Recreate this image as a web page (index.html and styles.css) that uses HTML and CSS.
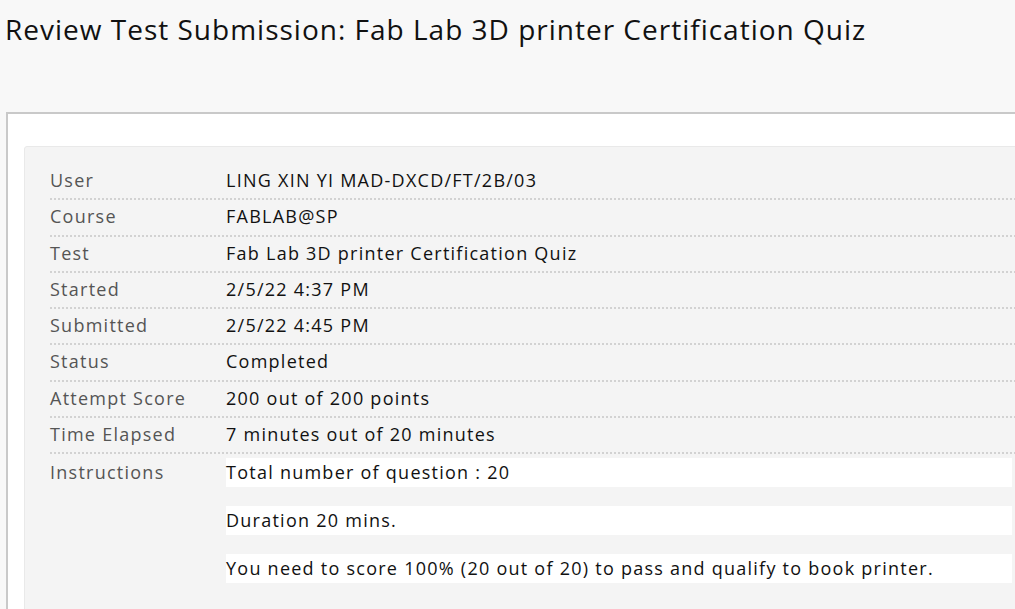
FILE: index.html
```html
<!DOCTYPE html>
<html lang="en">
<head>
<meta charset="utf-8">
<title>Review Test Submission</title>
<link rel="stylesheet" href="styles.css">
</head>
<body>
<h1 class="page-title">Review Test Submission: Fab Lab 3D printer Certification Quiz</h1>
<div class="content-box">
  <div class="details-panel">
    <dl class="details">
      <div class="row"><dt>User</dt><dd>LING XIN YI MAD-DXCD/FT/2B/03</dd></div>
      <div class="row"><dt>Course</dt><dd>FABLAB@SP</dd></div>
      <div class="row"><dt>Test</dt><dd>Fab Lab 3D printer Certification Quiz</dd></div>
      <div class="row"><dt>Started</dt><dd>2/5/22 4:37 PM</dd></div>
      <div class="row"><dt>Submitted</dt><dd>2/5/22 4:45 PM</dd></div>
      <div class="row"><dt>Status</dt><dd>Completed</dd></div>
      <div class="row"><dt>Attempt Score</dt><dd>200 out of 200 points</dd></div>
      <div class="row"><dt>Time Elapsed</dt><dd>7 minutes out of 20 minutes</dd></div>
      <div class="row row-instructions"><dt>Instructions</dt><dd>
        <p>Total number of question : 20</p>
        <p>Duration 20 mins.</p>
        <p>You need to score 100% (20 out of 20) to pass and qualify to book printer.</p>
      </dd></div>
    </dl>
  </div>
</div>
</body>
</html>
```
FILE: styles.css
```css
html, body {
  margin: 0;
  padding: 0;
  overflow: hidden;
}
body {
  background: #f8f8f8;
  font-family: "Open Sans", "Noto Sans", sans-serif;
  color: #111;
  width: 1015px;
  height: 609px;
}
.page-title {
  margin: 0;
  padding: 10px 0 0 5px;
  font-size: 28px;
  font-weight: 400;
  line-height: 38px;
  letter-spacing: 1px;
  color: #111;
  white-space: nowrap;
}
.content-box {
  margin: 64px -60px 0 6px;
  border: 2px solid #c9c9c9;
  background: #fff;
  padding: 32px 0 0 16px;
}
.details-panel {
  background: #f4f4f4;
  border: 1px solid #e9e9e9;
  border-radius: 3px;
  padding: 17px 0 60px 25px;
}
.details {
  margin: 0;
}
.row {
  display: grid;
  grid-template-columns: 176px 1fr;
  font-size: 18px;
  line-height: 27px;
  letter-spacing: 1.25px;
  padding: 3px 0 4.3px;
  border-bottom: 2px dotted #d2d2d2;
}
.row dt {
  color: #555;
}
.row dd {
  margin: 0;
  color: #111;
  white-space: nowrap;
}
.row-instructions {
  padding-top: 4px;
  border-bottom: none;
}
.row-instructions dt {
  line-height: 29px;
}
.row-instructions p {
  margin: 0 0 19px;
  width: 786px;
  background: #fff;
  line-height: 29px;
}
```
